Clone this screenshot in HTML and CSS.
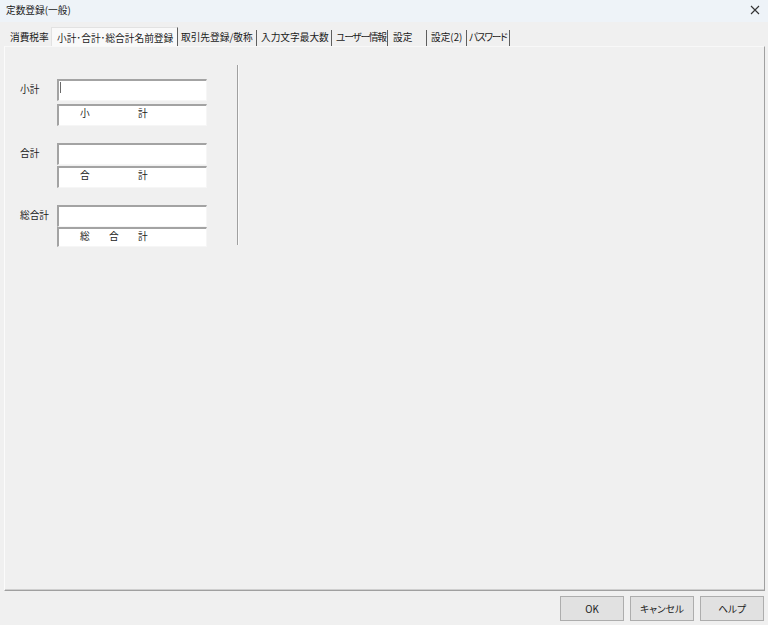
FILE: index.html
```html
<!DOCTYPE html>
<html lang="ja">
<head>
<meta charset="utf-8">
<title>定数登録(一般)</title>
<link rel="stylesheet" href="styles.css">
</head>
<body>
<div class="window">
  <div class="titlebar">
    <span class="title">定数登録(一般)</span>
    <svg class="close" width="10" height="10" viewBox="0 0 10 10"><path d="M1 1 L9 9 M9 1 L1 9" stroke="#333" stroke-width="1.1" fill="none"/></svg>
  </div>
  <div class="tabs">
    <div class="tab t1 nosep">消費税率</div>
    <div class="tab t2 active">小計･合計･総合計名前登録</div>
    <div class="tab t3">取引先登録/敬称</div>
    <div class="tab t4">入力文字最大数</div>
    <div class="tab t5 kana">ユーザー情報</div>
    <div class="tab t6">設定</div>
    <div class="tab t7">設定(2)</div>
    <div class="tab t8 kana">パスワード</div>
  </div>
  <div class="panel">
    <div class="content">
      <div class="groups">
        <div class="group g1">
          <div class="label">小計</div>
          <div class="boxes">
            <div class="box input"><span class="caret"></span></div>
            <div class="box caption">小　　　　　計</div>
          </div>
        </div>
        <div class="group g2">
          <div class="label">合計</div>
          <div class="boxes">
            <div class="box input"></div>
            <div class="box caption">合　　　　　計</div>
          </div>
        </div>
        <div class="group g3">
          <div class="label">総合計</div>
          <div class="boxes">
            <div class="box input"></div>
            <div class="box caption short">総　　合　　計</div>
          </div>
        </div>
      </div>
      <div class="vline"></div>
    </div>
  </div>
  <div class="buttons">
    <button class="btn">OK</button>
    <button class="btn">キャンセル</button>
    <button class="btn">ヘルプ</button>
  </div>
</div>
</body>
</html>
```
FILE: styles.css
```css
* { box-sizing: border-box; }
html, body { margin: 0; padding: 0; }
body {
  width: 768px;
  height: 625px;
  background: #f0f0f0;
  font-family: "Noto Sans CJK JP", "Noto Sans", sans-serif;
  font-size: 9.7px;
  color: #1a1a1a;
  font-feature-settings: "palt";
  overflow: hidden;
}
.window { width: 768px; height: 625px; display: flex; flex-direction: column; }

.titlebar {
  height: 22px;
  background: #eef3f8;
  display: flex;
  align-items: center;
  justify-content: space-between;
  padding: 0 8px 2px 6px;
}
.title { line-height: 14px; }
.close { display: block; }

.tabs {
  height: 24px;
  display: flex;
  align-items: flex-end;
  padding-left: 5px;
}
.tab {
  flex-shrink: 0;
  height: 16px;
  line-height: 15px;
  padding-left: 4px;
  border-right: 1px solid #5e5e5e;
  white-space: nowrap;
}
.tab.kana { letter-spacing: -1.2px; }
.tab.nosep { border-right: none; padding-left: 5px; }
.tab.active {
  height: 19px;
  padding-top: 3px;
  padding-left: 5px;
  background: #f9f9f9;
  border-left: 1px solid #e2e2e2;
  border-top: 1px solid #e2e2e2;
}
.t1 { width: 46px; }
.t2 { width: 127px; }
.t3 { width: 79px; padding-left: 3px; }
.t4 { width: 75px; }
.t5 { width: 56px; }
.t6 { width: 39px; padding-left: 5px; }
.t7 { width: 40px; }
.t8 { width: 43px; padding-left: 2px; }

.panel {
  margin-left: 4px;
  width: 761px;
  height: 545px;
  border-top: 1px solid #f8f8f8;
  border-left: 1px solid #fbfbfb;
  border-right: 1px solid #a0a0a0;
  border-bottom: 1px solid #a0a0a0;
  box-shadow: inset 0 -1px 0 #cfcfcf;
  padding: 18px 0 0 15px;
}
.content { display: flex; align-items: flex-start; }
.groups { padding-top: 14px; display: flex; flex-direction: column; gap: 17px; }
.group { display: flex; align-items: flex-start; }
.label { width: 37px; padding-top: 3px; line-height: 14px; }
.boxes { display: flex; flex-direction: column; width: 150px; }
.g1 .boxes { gap: 3px; }
.g2 .boxes { gap: 1px; }
.g3 .boxes { gap: 0; }

.box {
  height: 22px;
  background: #fff;
  border-top: 2px solid #a3a3a3;
  border-left: 2px solid #a3a3a3;
  border-right: 1px solid #f6f6f6;
  border-bottom: 1px solid #f6f6f6;
}
.box.short { height: 20px; }
.input { padding: 1px 0 0 1px; }
.caret { display: inline-block; width: 1px; height: 11px; background: #6a6a6a; vertical-align: top; }
.caption {
  padding-left: 21px;
  line-height: 14px;
  white-space: pre;
  font-feature-settings: normal;
}

.vline {
  width: 2px;
  height: 180px;
  margin-left: 30px;
  border-left: 1px solid #a0a0a0;
  border-right: 1px solid #fafafa;
}

.buttons {
  display: flex;
  justify-content: flex-end;
  gap: 6px;
  margin-top: 5px;
  padding-right: 4px;
}
.btn {
  width: 64px;
  height: 25px;
  background: #e1e1e1;
  border: 1px solid #adadad;
  font-family: inherit;
  font-size: 9.7px;
  font-feature-settings: "palt";
  color: #1a1a1a;
  padding: 0;
  margin: 0;
  line-height: 14px;
}
```
